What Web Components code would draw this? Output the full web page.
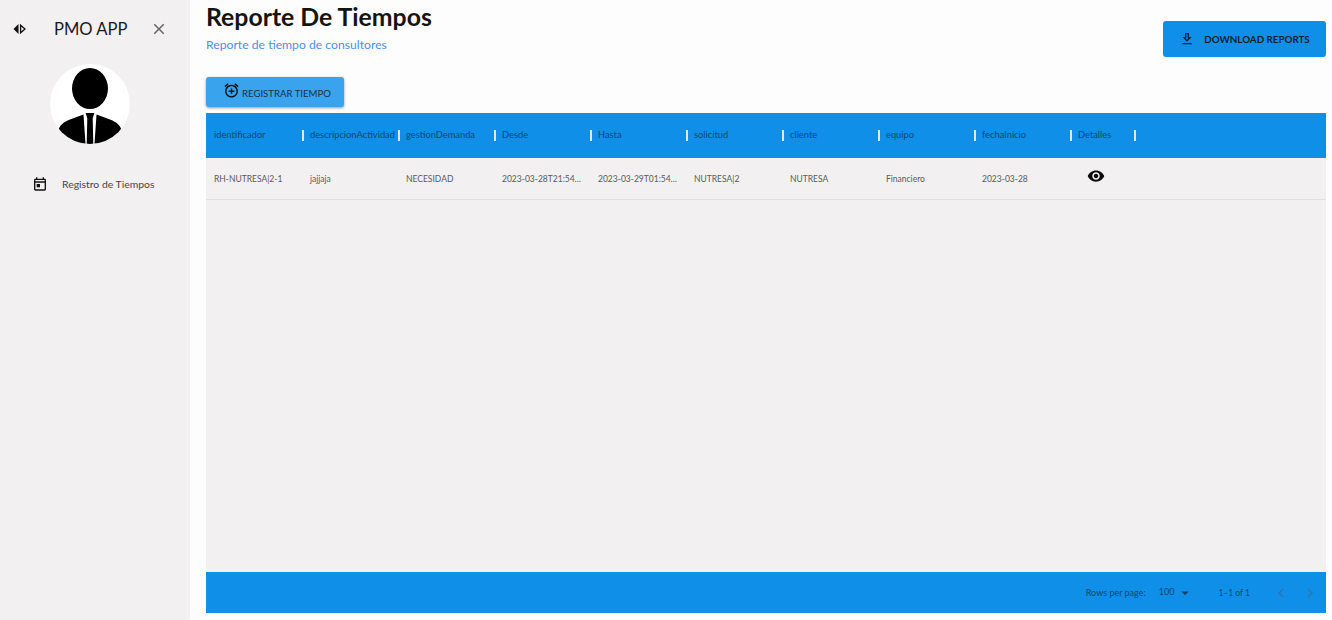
<!DOCTYPE html>
<html><head><meta charset="utf-8"><style>
html,body{margin:0;height:620px;overflow:hidden;background:#fdfdfd;font-family:Lato,"Liberation Sans",sans-serif}
body{display:flex;width:1332px}
app-main{flex:1;min-width:0}
</style></head><body>
<app-sidebar></app-sidebar>
<app-main></app-main>
<script>
const P={
 close:"M19 6.41L17.59 5 12 10.59 6.41 5 5 6.41 10.59 12 5 17.59 6.41 19 12 13.41 17.59 19 19 17.59 13.41 12z",
 event:"M19 4h-1V2h-2v2H8V2H6v2H5c-1.11 0-1.99.9-1.99 2L3 20c0 1.1.89 2 2 2h14c1.1 0 2-.9 2-2V6c0-1.1-.9-2-2-2zm0 16H5V10h14v10zm0-12H5V6h14v2zM7 12h5v5H7z",
 eye:"M12 4.5C7 4.5 2.73 7.61 1 12c1.73 4.39 6 7.5 11 7.5s9.27-3.11 11-7.5c-1.73-4.39-6-7.5-11-7.5zM12 17c-2.76 0-5-2.24-5-5s2.24-5 5-5 5 2.24 5 5-2.24 5-5 5zm0-8c-1.66 0-3 1.34-3 3s1.34 3 3 3 3-1.34 3-3-1.34-3-3-3z",
 dl:"M19 9h-4V3H9v6H5l7 7 7-7zm-8 2V5h2v6h1.17L12 13.17 9.83 11H11zm-6 7h14v2H5z",
 alarm:"M7.88 3.39L6.6 1.86 2 5.71l1.29 1.53 4.59-3.85zM22 5.72l-4.6-3.86-1.29 1.53 4.6 3.86L22 5.72zM12 4c-4.97 0-9 4.03-9 9s4.02 9 9 9c4.97 0 9-4.03 9-9s-4.03-9-9-9zm0 16c-3.87 0-7-3.13-7-7s3.13-7 7-7 7 3.13 7 7-3.13 7-7 7zm1-11h-2v3H8v2h3v3h2v-3h3v-2h-3V9z",
 left:"M15.41 7.41L14 6l-6 6 6 6 1.41-1.41L10.83 12z",
 right:"M10 6L8.59 7.41 13.17 12l-4.58 4.59L10 18l6-6z",
 drop:"M7 10l5 5 5-5z"
};
const ic=(n,s,c="currentColor")=>`<svg width="${s}" height="${s}" viewBox="0 0 24 24" fill="${c}" style="display:block;flex:none"><path d="${P[n]}"/></svg>`;
function def(name,html){customElements.define(name,class extends HTMLElement{constructor(){super();this.attachShadow({mode:"open"}).innerHTML=html}})}

def("user-avatar",`<style>:host{display:block;width:80px;height:80px}svg{display:block}</style>
<svg width="80" height="80" viewBox="0 0 80 80"><defs><clipPath id="c"><circle cx="40" cy="40" r="40"/></clipPath></defs>
<circle cx="40" cy="40" r="40" fill="#fff"/>
<g clip-path="url(#c)" fill="#000">
<ellipse cx="40" cy="24.500" rx="18" ry="20.500"/>
<path d="M33.500 50.500 L20 55.500 C13 58 9.500 62 8.500 66 L11 72 L22 80 H35.500 Z"/>
<path d="M46.500 50.500 L60 55.500 C67 58 70.500 62 71.500 66 L69 72 L58 80 H44.500 Z"/>
<path d="M35.700 49 H44.300 L42.700 54.500 L43.300 80 H36.700 L37.300 54.500 Z"/>
</g></svg>`);

def("app-sidebar",`<style>
:host{display:flex;flex-direction:column;align-items:flex-start;width:190px;height:620px;background:#f2f0f1;color:#111;flex:none;box-sizing:border-box}
.top{align-self:stretch;display:flex;align-items:center;padding:18px 0 0 13px;height:21px}
h1{margin:0 0 0 28px;width:74px;font:400 16.600px Lato,sans-serif;color:#1a1a1a;white-space:nowrap}
.x{margin-left:22px;color:#666}
user-avatar{margin:25px 0 0 50px}
.item{display:flex;align-items:center;margin-top:30px;align-self:stretch;padding-left:32px;height:20px;color:#44444e;font-size:10.400px;gap:14px}
.flip{display:block}
</style>
<div class="top">
<svg class="flip" width="13" height="12" viewBox="0 0 13 12"><path d="M5.500 1V11L.5 6z" fill="#111"/><path d="M7.600 2.200V9.800L12 6z" fill="none" stroke="#111" stroke-width="1.300"/></svg>
<h1>PMO APP</h1><span class="x">${ic("close",18,"#666")}</span></div>
<user-avatar></user-avatar>
<div class="item"><span style="color:#111">${ic("event",16)}</span><span>Registro de Tiempos</span></div>`);

def("app-header",`<style>
:host{display:flex;justify-content:space-between;align-items:flex-start;height:77px}
h2{margin:0;font:700 24.800px/33px Lato,sans-serif;color:#141414}
p{margin:3px 0 0;font-size:12.200px;line-height:18px;color:#4a90e8}
button{margin-top:21px;width:163px;height:36px;border:0;border-radius:3px;background:#108fe9;color:#10202e;font:700 9.800px Lato,sans-serif;display:flex;align-items:center;justify-content:center;gap:9px;padding:0}
</style><div><h2>Reporte De Tiempos</h2><p>Reporte de tiempo de consultores</p></div>
<button>${ic("dl",16)}<span>DOWNLOAD REPORTS</span></button>`);

def("add-button",`<style>
:host{display:inline-flex;align-items:center;gap:2px;width:138px;height:30px;box-sizing:border-box;padding:0 0 0 17px;background:#3aa3ee;border-radius:3px;box-shadow:0 1px 3px rgba(0,0,0,.4);color:#1e3040;font-size:9.600px}
span{padding-top:3px;white-space:nowrap}svg{margin-top:-4px}
</style>${ic("alarm",17,"#111")}<span>REGISTRAR TIEMPO</span>`);

const heads=["identificador","descripcionActividad","gestionDemanda","Desde","Hasta","solicitud","cliente","equipo","fechaInicio","Detalles"];
const cells=["RH-NUTRESA|2-1","jajjaja","NECESIDAD","2023-03-28T21:54…","2023-03-29T01:54…","NUTRESA|2","NUTRESA","Financiero","2023-03-28"];
def("data-grid",`<style>
:host{display:flex;flex-direction:column;flex:1;min-height:0;background:#f2f0f1;font-size:9.300px;color:#4b4b4b}
.h,.r{display:grid;grid-template-columns:repeat(9,96px) 64px}
.h{height:45px;background:#108fe9;color:#12456e;align-items:center;flex:none}
.h div{position:relative;padding:0 0 2px 8px;white-space:nowrap}
.h div::after{content:"";position:absolute;right:-1.500px;top:50%;margin-top:-5.500px;width:1.500px;height:11px;background:#d5ebfb}
.r{height:41px;border-bottom:1px solid #e0e0e0;align-items:center;flex:none;font-size:8.500px}
.r div{padding:0 8px;white-space:nowrap;color:#5a5a5a}
.eye{padding:0!important;margin-top:-5px}.eye svg{margin-left:17px}
.sp{flex:1}
.f{height:41px;background:#108fe9;color:#12456e;display:flex;align-items:center;flex:none;padding-right:7px;justify-content:flex-end;font-size:9px}
.f span{white-space:nowrap}
.dd{display:flex;align-items:center;margin-left:13px;color:#12456e}
.n{display:flex;margin-left:22px;gap:11px}
</style>
<div class="h">${heads.map(t=>`<div>${t}</div>`).join("")}</div>
<div class="r">${cells.map(t=>`<div>${t}</div>`).join("")}<div class="eye">${ic("eye",18,"#0a0a0a")}</div></div>
<div class="sp"></div>
<div class="f"><span>Rows per page:</span><span class="dd"><span style="margin-top:-2px">100</span><span style="margin-left:2px">${ic("drop",18,"#12456e")}</span></span><span style="margin-left:24px;font-size:8.500px">1–1 of 1</span>
<span class="n">${ic("left",18,"#2f75ab")}${ic("right",18,"#2f75ab")}</span></div>`);

def("app-main",`<style>
:host{display:flex;flex-direction:column;height:613px;padding:0 6px 0 16px;box-sizing:content-box}
add-button{align-self:flex-start;margin-bottom:6px}
</style><app-header></app-header><add-button></add-button><data-grid></data-grid>`);
</script>
</body></html>
